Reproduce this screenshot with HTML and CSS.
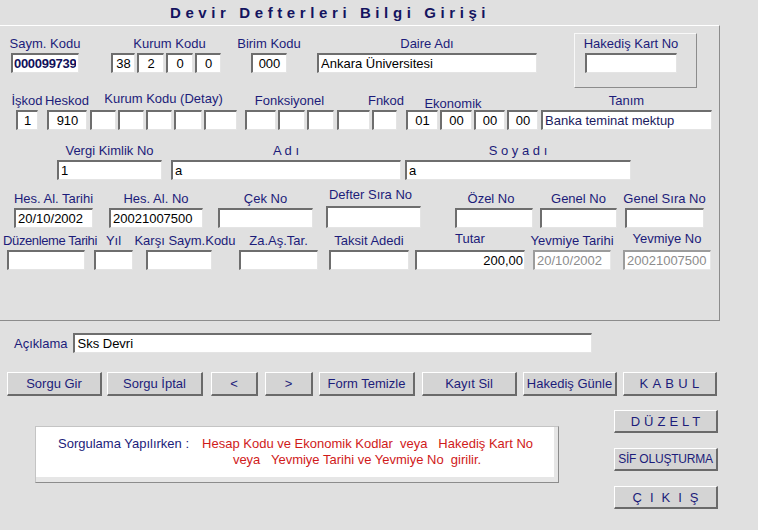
FILE: index.html
```html
<!DOCTYPE html>
<html lang="tr">
<head>
<meta charset="UTF-8">
<meta name="viewport" content="width=device-width, initial-scale=1.0">
<title>Devir Defterleri Bilgi Girişi</title>
<link rel="stylesheet" href="styles.css">
</head>
<body>

<div class="title">Devir Defterleri Bilgi Girişi</div>

<div class="panel">

  <div class="row row1">
    <div class="field f-saym">
      <label>Saym. Kodu</label>
      <input class="strong" value="000099739">
    </div>
    <div class="field f-kurum">
      <label class="nudge-r">Kurum Kodu</label>
      <div class="segs">
        <input class="c w24" value="38">
        <input class="c w27" value="2">
        <input class="c w27" value="0">
        <input class="c w26" value="0">
      </div>
    </div>
    <div class="field f-birim">
      <label>Birim Kodu</label>
      <input class="c" value="000">
    </div>
    <div class="field f-daire">
      <label>Daire Adı</label>
      <input value="Ankara Üniversitesi">
    </div>
    <div class="hak-box">
      <div class="field f-hak">
        <label>Hakediş Kart No</label>
        <input value="">
      </div>
    </div>
  </div>

  <div class="row row2">
    <div class="field f-iskod">
      <label>İşkod</label>
      <input class="c" value="1">
    </div>
    <div class="field f-heskod">
      <label>Heskod</label>
      <input class="c" value="910">
    </div>
    <div class="field f-detay">
      <label class="up">Kurum Kodu (Detay)</label>
      <div class="segs">
        <input class="w26" value="">
        <input class="w26" value="">
        <input class="w26" value="">
        <input class="w28" value="">
        <input class="w33" value="">
      </div>
    </div>
    <div class="field f-fonk">
      <label>Fonksiyonel</label>
      <div class="segs">
        <input class="w31" value="">
        <input class="w27" value="">
        <input class="w27" value="">
      </div>
    </div>
    <div class="field f-fnkod">
      <label class="fnkod-lbl">Fnkod</label>
      <div class="segs">
        <input class="w33" value="">
        <input class="w25" value="">
      </div>
    </div>
    <div class="field f-eko">
      <label class="eko-lbl">Ekonomik</label>
      <div class="segs">
        <input class="c w32" value="01">
        <input class="c w32" value="00">
        <input class="c w31" value="00">
        <input class="c w31" value="00">
      </div>
    </div>
    <div class="field f-tanim">
      <label>Tanım</label>
      <input class="navy" value="Banka teminat mektup">
    </div>
  </div>

  <div class="row row3">
    <div class="field f-vergi">
      <label>Vergi Kimlik No</label>
      <input value="1">
    </div>
    <div class="field f-adi">
      <label>A d ı</label>
      <input value="a">
    </div>
    <div class="field f-soyadi">
      <label>S o y a d ı</label>
      <input value="a">
    </div>
  </div>

  <div class="row row4">
    <div class="field f-hestar">
      <label>Hes. Al. Tarihi</label>
      <input value="20/10/2002">
    </div>
    <div class="field f-hesno">
      <label>Hes. Al. No</label>
      <input value="20021007500">
    </div>
    <div class="field f-cek">
      <label>Çek No</label>
      <input value="">
    </div>
    <div class="field f-defter tall">
      <label class="nudge-l">Defter Sıra No</label>
      <input value="">
    </div>
    <div class="field f-ozel">
      <label class="nudge-l">Özel No</label>
      <input value="">
    </div>
    <div class="field f-genel">
      <label>Genel No</label>
      <input value="">
    </div>
    <div class="field f-gsira">
      <label>Genel Sıra No</label>
      <input value="">
    </div>
  </div>

  <div class="row row5">
    <div class="field f-duzen">
      <label class="duzen-lbl">Düzenleme Tarihi</label>
      <input value="">
    </div>
    <div class="field f-yil">
      <label>Yıl</label>
      <input value="">
    </div>
    <div class="field f-karsi">
      <label class="karsi-lbl">Karşı Saym.Kodu</label>
      <input value="">
    </div>
    <div class="field f-zaas">
      <label>Za.Aş.Tar.</label>
      <input value="">
    </div>
    <div class="field f-taksit">
      <label>Taksit Adedi</label>
      <input value="">
    </div>
    <div class="field f-tutar">
      <label class="up">Tutar</label>
      <input class="r" value="200,00">
    </div>
    <div class="field f-yevtar">
      <label>Yevmiye Tarihi</label>
      <input class="off" value="20/10/2002" readonly>
    </div>
    <div class="field f-yevno">
      <label class="up">Yevmiye No</label>
      <input class="off" value="20021007500" readonly>
    </div>
  </div>

</div>

<div class="aciklama">
  <label>Açıklama</label>
  <input value="Sks Devri">
</div>

<div class="buttons">
  <button class="btn b-sgir">Sorgu Gir</button>
  <button class="btn b-siptal">Sorgu İptal</button>
  <button class="btn b-prev">&lt;</button>
  <button class="btn b-next">&gt;</button>
  <button class="btn b-temiz">Form Temizle</button>
  <button class="btn b-sil">Kayıt Sil</button>
  <button class="btn b-hak">Hakediş Günle</button>
  <button class="btn b-kabul">KABUL</button>
</div>

<div class="lower">
  <div class="msg">
    <span class="msg-title">Sorgulama Yapılırken :</span>
    <div class="msg-text">
      <div class="line">Hesap Kodu ve Ekonomik Kodlar  veya   Hakediş Kart No</div>
      <div class="line line2">veya   Yevmiye Tarihi ve Yevmiye No  girilir.</div>
    </div>
  </div>
  <div class="side">
    <button class="btn side-btn b-duzelt">DÜZELT</button>
    <button class="btn side-btn b-sif">SİF OLUŞTURMA</button>
    <button class="btn side-btn b-cikis">ÇIKIŞ</button>
  </div>
</div>

</body>
</html>
```

FILE: styles.css
```css
body {
  margin: 0;
  background-color: #e0e0e0;
  font-family: "Liberation Sans", Arial, sans-serif;
  font-size: 13px;
  color: #1c1c7a;
}

.title {
  height: 25px;
  line-height: 25px;
  padding-left: 170px;
  font-size: 15px;
  font-weight: bold;
  letter-spacing: 4.6px;
  color: #14145f;
  white-space: nowrap;
}

/* main form block */
.panel {
  width: 720px;
  box-sizing: border-box;
  padding: 10px 0 50px;
  border-top: 1px solid #fff;
  border-right: 1px solid #8c8c8c;
  border-bottom: 1px solid #8c8c8c;
}

.row {
  display: flex;
  align-items: flex-start;
}

.row2 { margin-top: 5px; }
.row3 { margin-top: 13px; }
.row4 { margin-top: 11px; }
.row5 { margin-top: 5px; }

.field {
  display: flex;
  flex-direction: column;
  align-items: center;
  flex: none;
}

.field label {
  display: block;
  height: 15px;
  line-height: 15px;
  margin-bottom: 2px;
  white-space: nowrap;
}

.segs {
  display: flex;
  gap: 2px;
  width: 100%;
}

input {
  display: block;
  box-sizing: border-box;
  width: 100%;
  height: 20px;
  margin: 0;
  padding: 0 2px;
  border-style: solid;
  border-width: 2px 1px 1px 2px;
  border-color: #6e6e6e #e4e4e4 #e4e4e4 #6e6e6e;
  background-color: #fff;
  font-family: "Liberation Sans", Arial, sans-serif;
  font-size: 13px;
  color: #000;
  outline: none;
}

input.c { text-align: center; padding: 0; }
input.r { text-align: right; padding: 0 1px 0 0; }
input.strong { font-weight: bold; color: #10105a; letter-spacing: -0.3px; padding-left: 1px; }
input.navy { color: #1a1a5e; }
input.off {
  color: #8c8c8c;
  border-color: #9c9c9c #e8e8e8 #e8e8e8 #9c9c9c;
}

.w24 { width: 24px; }
.w25 { width: 25px; }
.w26 { width: 26px; }
.w27 { width: 27px; }
.w28 { width: 28px; }
.w31 { width: 31px; }
.w32 { width: 32px; }
.w33 { width: 33px; }

/* label nudges */
.field label.up { margin-top: -2px; margin-bottom: 4px; }
.field label.nudge-r { margin-left: 7px; }
.field label.nudge-l { margin-right: 6px; }
.field label.fnkod-lbl { margin-left: 38px; }
.field label.eko-lbl { margin-right: 38px; margin-top: 3px; margin-bottom: -1px; }
.field label.duzen-lbl { margin-left: 8px; letter-spacing: -0.4px; }
.field label.karsi-lbl { margin-left: 12px; }

.tall label { margin-top: -4px; margin-bottom: 4px; }
.tall input { height: 22px; }

/* row 1 */
.f-saym { width: 68px; margin-left: 11px; }
.f-kurum { width: 110px; margin-left: 32px; }
.f-birim { width: 36px; margin-left: 30px; }
.f-daire { width: 220px; margin-left: 30px; }

.hak-box {
  box-sizing: border-box;
  width: 123px;
  margin: -3px 0 0 37px;
  padding: 2px 0 14px 10px;
  border: 1px solid;
  border-color: #f8f8f8 #8c8c8c #8c8c8c #f8f8f8;
}
.f-hak { width: 92px; }

/* row 2 */
.f-iskod { width: 22px; margin-left: 16px; }
.f-heskod { width: 40px; margin-left: 9px; }
.f-detay { width: 147px; margin-left: 3px; }
.f-fonk { width: 89px; margin-left: 8px; }
.f-fnkod { width: 60px; margin-left: 3px; }
.f-eko { width: 132px; margin-left: 9px; }
.f-tanim { width: 171px; margin-left: 3px; }

/* row 3 */
.f-vergi { width: 105px; margin-left: 57px; }
.f-adi { width: 230px; margin-left: 9px; }
.f-soyadi { width: 226px; margin-left: 4px; }

/* row 4 */
.f-hestar { width: 79px; margin-left: 14px; }
.f-hesno { width: 94px; margin-left: 16px; }
.f-cek { width: 95px; margin-left: 15px; }
.f-defter { width: 95px; margin-left: 13px; }
.f-ozel { width: 78px; margin-left: 34px; }
.f-genel { width: 77px; margin-left: 7px; }
.f-gsira { width: 79px; margin-left: 8px; }

/* row 5 */
.f-duzen { width: 78px; margin-left: 7px; }
.f-yil { width: 39px; margin-left: 9px; }
.f-karsi { width: 66px; margin-left: 13px; }
.f-zaas { width: 79px; margin-left: 27px; }
.f-taksit { width: 80px; margin-left: 11px; }
.f-tutar { width: 110px; margin-left: 6px; }
.f-yevtar { width: 78px; margin-left: 8px; }
.f-yevno { width: 88px; margin-left: 12px; }

/* description */
.aciklama {
  display: flex;
  align-items: center;
  margin-top: 12px;
}

.aciklama label {
  margin-left: 14px;
  white-space: nowrap;
}

.aciklama input {
  width: 519px;
  margin-left: 6px;
}

/* buttons */
.buttons {
  display: flex;
  margin-top: 19px;
}

.btn {
  flex: none;
  box-sizing: border-box;
  height: 24px;
  padding: 0;
  background-color: #d4d4d4;
  border-style: solid;
  border-width: 1px 2px 2px 1px;
  border-color: #fff #6a6a6a #6a6a6a #fff;
  font-family: "Liberation Sans", Arial, sans-serif;
  font-size: 13px;
  color: #1c1c7a;
  white-space: nowrap;
}

.b-sgir { width: 95px; margin-left: 7px; }
.b-siptal { width: 96px; margin-left: 5px; }
.b-prev { width: 47px; margin-left: 8px; }
.b-next { width: 48px; margin-left: 7px; }
.b-temiz { width: 96px; margin-left: 6px; }
.b-sil { width: 95px; margin-left: 7px; }
.b-hak { width: 94px; margin-left: 6px; }
.b-kabul { width: 94px; margin-left: 6px; letter-spacing: 4.3px; text-indent: 4px; }

/* bottom area */
.lower {
  display: flex;
  align-items: flex-start;
  margin-top: 14px;
}

.msg {
  display: flex;
  align-items: flex-start;
  box-sizing: border-box;
  width: 524px;
  height: 57px;
  margin: 16px 0 0 35px;
  padding: 9px 0 0 22px;
  background-color: #fff;
  border: 1px solid;
  border-color: #c4c4c4 #8c8c8c #8c8c8c #c4c4c4;
  box-shadow: inset -4px -5px 0 #e6e6e6;
}

.msg-title {
  line-height: 16px;
  white-space: nowrap;
}

.msg-text {
  width: 331px;
  margin-left: 13px;
  line-height: 16px;
  color: #d01a1a;
  text-align: center;
}

.msg-text .line {
  white-space: pre;
}

.msg-text .line2 {
  padding-right: 21px;
}

.side {
  display: flex;
  flex-direction: column;
  gap: 15px;
  margin-left: 55px;
}

.side-btn {
  width: 104px;
  height: 23px;
}

.b-duzelt { letter-spacing: 4px; text-indent: 4px; }
.b-sif { font-size: 12px; letter-spacing: -0.2px; }
.b-cikis { letter-spacing: 8px; text-indent: 8px; }
```
